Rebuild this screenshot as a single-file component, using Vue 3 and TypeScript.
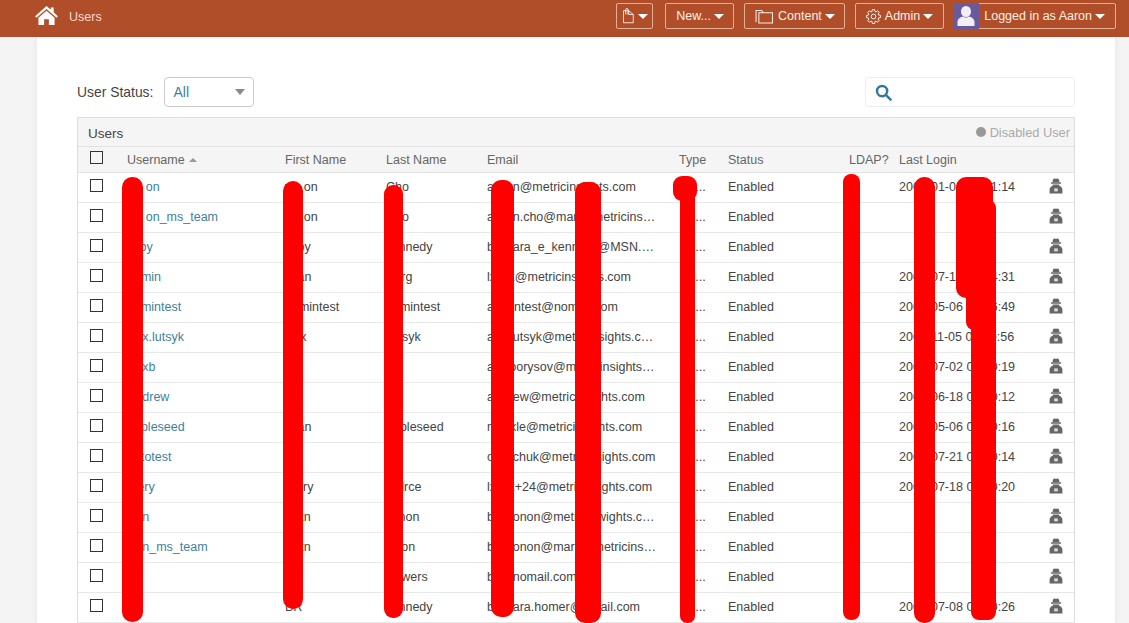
<script setup lang="ts">
interface UserRow {
  user: string
  first: string
  last: string
  email: string
  login: string
}

// characters under the red marks are filler, the reference hides them
const rows: UserRow[] = [
  { user: 'wx on', first: 'wx on', last: 'Cho', email: 'axxxn@metricinsights.com', login: '2000-01-00 00:01:14' },
  { user: 'wx on_ms_team', first: 'wx on', last: 'Cho', email: 'axxxn.cho@marxxlmetricinsights.com', login: '' },
  { user: 'xxby', first: 'xxby', last: 'xxnnedy', email: 'bxxxara_e_kennxxx@MSN.xxxxxxxxx', login: '' },
  { user: 'admin', first: 'xxan', last: 'wxrg', email: 'lxxxx@metricinsights.com', login: '2000-07-10 00:04:31' },
  { user: 'admintest', first: 'admintest', last: 'admintest', email: 'admintest@nomail.com', login: '2000-05-06 00:06:49' },
  { user: 'wxx.lutsyk', first: 'wxx', last: 'xxtsyk', email: 'axxxutsyk@metricinsights.com', login: '2000-11-05 00:00:56' },
  { user: 'wxxb', first: '', last: '', email: 'axxlborysov@metricinsights.com', login: '2000-07-02 00:00:19' },
  { user: 'wxdrew', first: '', last: '', email: 'axxxew@metricinsights.com', login: '2000-06-18 00:00:12' },
  { user: 'appleseed', first: 'xxan', last: 'appleseed', email: 'mxxxle@metricinsights.com', login: '2000-05-06 00:00:16' },
  { user: 'autotest', first: '', last: '', email: 'oxxxchuk@metricinsights.com', login: '2000-07-21 00:00:14' },
  { user: 'rxery', first: 'wxlry', last: 'wxlrce', email: 'lxxxx+24@metricinsights.com', login: '2000-07-18 00:00:20' },
  { user: 'wxn', first: 'xxxn', last: 'xxnon', email: 'bxxxonon@metricinwights.com', login: '' },
  { user: 'wxn_ms_team', first: 'xxxn', last: 'wxon', email: 'bxxxonon@marxxxmetricinsights.com', login: '' },
  { user: '', first: '', last: 'wxwers', email: 'bxxxnomail.com', login: '' },
  { user: '', first: 'BR', last: 'xxnnedy', email: 'bxxxara.homer@wwail.com', login: '2000-07-08 00:00:26' }
]

const marks = [
  { x: 122, y: 177, w: 21, h: 445, r: 10 },
  { x: 283, y: 181, w: 20, h: 428, r: 10 },
  { x: 384, y: 185, w: 19, h: 433, r: 9 },
  { x: 491, y: 180, w: 23, h: 437, r: 10 },
  { x: 575, y: 182, w: 26, h: 441, r: 10 },
  { x: 673, y: 176, w: 24, h: 25, r: 9 },
  { x: 680, y: 190, w: 15, h: 433, r: 7 },
  { x: 843, y: 174, w: 17, h: 446, r: 8 },
  { x: 914, y: 177, w: 21, h: 446, r: 10 },
  { x: 956, y: 177, w: 37, h: 121, r: 10 },
  { x: 966, y: 200, w: 30, h: 130, r: 8 },
  { x: 971, y: 305, w: 25, h: 315, r: 8 }
]

// eight toothed outline for the admin button
const gearPath = (() => {
  const pts: string[] = []
  const teeth = 8
  for (let i = 0; i < teeth; i++) {
    const a = (i / teeth) * Math.PI * 2
    const step = Math.PI / teeth
    const add = (r: number, o: number) =>
      pts.push(`${(12 + r * Math.cos(a + o)).toFixed(1)} ${(12 + r * Math.sin(a + o)).toFixed(1)}`)
    add(8.4, -step * 0.75)
    add(11.2, -step * 0.4)
    add(11.2, step * 0.4)
    add(8.4, step * 0.75)
  }
  return 'M' + pts.join(' L') + ' Z'
})()
</script>

<template>
  <div class="page">
    <header class="topbar">
      <div class="crumb">
        <svg class="home" viewBox="0 0 24 20" width="23" height="19">
          <path d="M12 0 L16.5 4 V1.5 H19.5 V6.7 L24 10.8 L22.6 12.4 L12 3.1 L1.4 12.4 L0 10.8 Z" fill="#fff" />
          <path d="M12 5 L20.5 12.4 V20 H14.5 V14 H9.5 V20 H3.5 V12.4 Z" fill="#fff" />
        </svg>
        <span class="crumb-text">Users</span>
      </div>
      <nav class="actions">
        <button class="nav-btn clip-btn">
          <svg viewBox="0 0 16 22" width="14" height="20" fill="none" stroke="#fbeee6" stroke-width="1.2">
            <path d="M2 4 H9 L15 9 V20 H2 Z" />
            <path d="M9 4 V9 H15" />
            <path d="M5 9 V2.5 a1.5 1.5 0 0 1 3 0 V9" stroke="#fff" />
          </svg>
          <i class="caret"></i>
        </button>
        <button class="nav-btn">New... <i class="caret"></i></button>
        <button class="nav-btn">
          <svg viewBox="0 0 20 16" width="19" height="15" fill="none" stroke="#fbeee6" stroke-width="1.1">
            <path d="M1 14 V1.5 H7 L8.5 4 H18.5 V15 H4 V4 H8.5" />
          </svg>
          Content <i class="caret"></i>
        </button>
        <button class="nav-btn admin-btn">
          <svg viewBox="0 0 24 24" width="15" height="15" fill="none" stroke="#fbeee6" stroke-width="1.6">
            <circle cx="12" cy="12" r="3.8" />
            <path :d="gearPath" stroke-linejoin="round" />
          </svg>
          Admin <i class="caret"></i>
        </button>
        <button class="nav-btn user-btn">
          <span class="avatar">
            <svg viewBox="0 0 26 26" width="26" height="26">
              <ellipse cx="13" cy="8.5" rx="5" ry="5.5" fill="#f1eef8" />
              <path d="M4.5 23 V19 C4.5 15.5 8 14 10 13.5 C12 15 14 15 16 13.5 C18 14 21.5 15.5 21.5 19 V23 Z" fill="#f1eef8" />
            </svg>
          </span>
          <span class="user-label">Logged in as Aaron <i class="caret"></i></span>
        </button>
      </nav>
    </header>

    <main class="card">
      <div class="filters">
        <div class="status-filter">
          <label class="status-label">User Status:</label>
          <div class="status-select">
            <span>All</span>
            <i class="select-caret"></i>
          </div>
        </div>
        <div class="search">
          <svg viewBox="0 0 18 18" width="17" height="17" fill="none" stroke="#33789a" stroke-width="2.6">
            <circle cx="7.5" cy="7.5" r="5.4" />
            <path d="M11.5 11.5 L16.5 16.5" stroke-linecap="round" />
          </svg>
        </div>
      </div>

      <section class="grid-box">
        <div class="grid-title">
          <span class="title-text">Users</span>
          <span class="legend"><i class="legend-dot"></i>Disabled User</span>
        </div>
        <table class="grid">
          <colgroup>
            <col style="width: 39px" />
            <col style="width: 158px" />
            <col style="width: 101px" />
            <col style="width: 101px" />
            <col style="width: 192px" />
            <col style="width: 49px" />
            <col style="width: 121px" />
            <col style="width: 50px" />
            <col style="width: 150px" />
            <col />
          </colgroup>
          <thead>
            <tr>
              <th class="check-cell"><i class="check"></i></th>
              <th>Username <i class="sort"></i></th>
              <th>First Name</th>
              <th>Last Name</th>
              <th>Email</th>
              <th>Type</th>
              <th>Status</th>
              <th>LDAP?</th>
              <th>Last Login</th>
              <th></th>
            </tr>
          </thead>
          <tbody>
            <tr v-for="(row, i) in rows" :key="i">
              <td class="check-cell"><i class="check"></i></td>
              <td class="link">{{ row.user }}</td>
              <td>{{ row.first }}</td>
              <td>{{ row.last }}</td>
              <td>{{ row.email }}</td>
              <td class="type-cell">xxi...</td>
              <td>Enabled</td>
              <td></td>
              <td>{{ row.login }}</td>
              <td class="spy-cell">
                <svg viewBox="0 0 14 16" width="14" height="16">
                  <path d="M3.6 4.2 C3.6 1.6 4.4 0.4 5.4 0.4 C6 0.4 6.4 0.8 7 0.8 C7.6 0.8 8 0.4 8.6 0.4 C9.6 0.4 10.4 1.6 10.4 4.2 Z" fill="#666" />
                  <rect x="1.8" y="4.2" width="10.4" height="1.5" rx="0.7" fill="#666" />
                  <path d="M0.6 15.6 V11.8 C0.6 9.6 2 8.4 3.8 7.8 V6.4 H10.2 V7.8 C12 8.4 13.4 9.6 13.4 11.8 V15.6 Z" fill="#666" />
                  <rect x="5.2" y="10.4" width="3.6" height="3" fill="#ddd" />
                </svg>
              </td>
            </tr>
          </tbody>
        </table>
      </section>
    </main>

    <div
      v-for="(m, i) in marks"
      :key="'mark' + i"
      class="mark"
      :style="{ left: m.x + 'px', top: m.y + 'px', width: m.w + 'px', height: m.h + 'px', borderRadius: m.r + 'px' }"
    ></div>
  </div>
</template>

<style>
html,
body {
  margin: 0;
  overflow: hidden;
}
</style>

<style scoped>
.page {
  position: relative;
  width: 1129px;
  height: 623px;
  overflow: hidden;
  background: #f4f4f4;
  font-family: "Liberation Sans", Arial, sans-serif;
  font-size: 12px;
  color: #444;
}

.topbar {
  height: 37px;
  box-sizing: border-box;
  background: #b14e2a;
  display: flex;
  align-items: flex-start;
  justify-content: space-between;
  padding: 3px 13px 0 35px;
}

.crumb {
  display: flex;
  align-items: center;
  height: 24px;
}

.home {
  display: block;
}

.crumb-text {
  margin-left: 11px;
  margin-top: 3px;
  color: #f3d9ca;
  font-size: 12.5px;
}

.actions {
  display: flex;
  gap: 10px;
}

.nav-btn {
  height: 26px;
  box-sizing: border-box;
  display: flex;
  align-items: center;
  gap: 3px;
  padding: 0 9px 0 10px;
  background: transparent;
  border: 1px solid #e3b096;
  border-radius: 2px;
  color: #fbeee6;
  font-family: inherit;
  font-size: 12.5px;
  white-space: nowrap;
}

.nav-btn svg {
  margin-right: 1px;
}

.clip-btn {
  padding: 0 4px 0 5px;
  width: 37px;
  margin-right: 2px;
}

.admin-btn {
  padding-right: 10px;
  margin-right: -1px;
}

.caret {
  display: inline-block;
  width: 0;
  height: 0;
  border-left: 5px solid transparent;
  border-right: 5px solid transparent;
  border-top: 5px solid #fff;
}

.user-btn {
  padding: 0 10px 0 0;
  gap: 0;
}

.avatar {
  width: 26px;
  height: 26px;
  margin: -1px 0 -1px -1px;
  background: #6a5a9c;
  display: block;
}

.user-label {
  margin-left: 5px;
  display: flex;
  align-items: center;
  gap: 3px;
}

.card {
  margin: 0 14px 0 37px;
  height: 586px;
  box-sizing: border-box;
  padding: 40px 40px 0;
  background: #fff;
  box-shadow: 0 0 6px rgba(0, 0, 0, 0.08);
}

.filters {
  display: flex;
  justify-content: space-between;
  height: 30px;
  margin-bottom: 10px;
}

.status-filter {
  display: flex;
  align-items: center;
}

.status-label {
  font-size: 13.9px;
  color: #444;
  margin-right: 11px;
}

.status-select {
  width: 90px;
  height: 30px;
  box-sizing: border-box;
  border: 1px solid #ccc;
  border-radius: 4px;
  padding: 0 8px;
  display: flex;
  align-items: center;
  justify-content: space-between;
  color: #3f7f9a;
  font-size: 14px;
}

.select-caret {
  width: 0;
  height: 0;
  border-left: 5px solid transparent;
  border-right: 5px solid transparent;
  border-top: 6px solid #888;
}

.search {
  width: 210px;
  height: 30px;
  box-sizing: border-box;
  border: 1px solid #eee;
  border-radius: 3px;
  padding-left: 9px;
  display: flex;
  align-items: center;
}

.grid-box {
  border: 1px solid #ddd;
  border-bottom: 0;
}

.grid-title {
  height: 29px;
  box-sizing: border-box;
  padding: 0 4px 0 10px;
  background: #f5f5f5;
  border-bottom: 1px solid #e2e2e2;
  display: flex;
  align-items: center;
  justify-content: space-between;
  font-size: 13.5px;
  color: #444;
}

.title-text {
  margin-top: 2px;
}

.legend {
  display: flex;
  align-items: center;
  color: #aaa;
  font-size: 12.8px;
}

.legend-dot {
  width: 10px;
  height: 10px;
  border-radius: 50%;
  background: #999;
  margin-right: 4px;
}

.grid {
  width: 100%;
  table-layout: fixed;
  border-collapse: collapse;
}

.grid th {
  height: 25px;
  padding: 2px 0 0 10px;
  box-sizing: border-box;
  background: #f5f5f5;
  border-bottom: 1px solid #e2e2e2;
  font-weight: normal;
  text-align: left;
  font-size: 12.5px;
  color: #666;
  white-space: nowrap;
}

.grid td {
  height: 30px;
  box-sizing: border-box;
  padding: 0 12px 0 10px;
  border-bottom: 1px solid #e8e8e8;
  font-size: 12.5px;
  color: #444;
  white-space: nowrap;
  overflow: hidden;
  text-overflow: ellipsis;
}

.grid td.link {
  color: #3f7f9a;
}

.grid td.type-cell {
  padding: 0 0 0 11px;
}

.grid .check-cell {
  padding: 0 0 0 12px;
}

.grid th.check-cell {
  padding-top: 0;
}

.check {
  display: block;
  width: 13px;
  height: 13px;
  margin-bottom: 3px;
  box-sizing: border-box;
  border: 1px solid #333;
}

.sort {
  display: inline-block;
  width: 0;
  height: 0;
  margin-left: 1px;
  vertical-align: 2px;
  border-left: 4px solid transparent;
  border-right: 4px solid transparent;
  border-bottom: 4px solid #999;
}

.grid td.spy-cell {
  padding: 0 0 0 10px;
  overflow: visible;
}

.spy-cell svg {
  display: block;
  margin-top: -3px;
}

.mark {
  position: absolute;
  background: #fe0000;
}
</style>
